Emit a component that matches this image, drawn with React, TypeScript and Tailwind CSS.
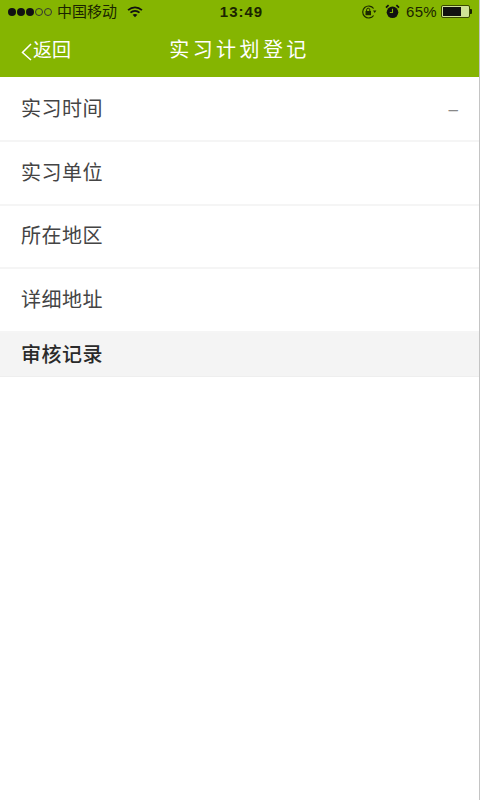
import React from 'react';

const ROWS = [
  { label: '实习时间', value: '–' },
  { label: '实习单位' },
  { label: '所在地区' },
  { label: '详细地址' },
];

const Wifi = () => (
  <svg width="16" height="12" viewBox="0 0 17 13" fill="none" stroke="#111" strokeWidth="2">
    <path d="M1 4.5C5.5 .5 11.5 .5 16 4.5" />
    <path d="M3.6 7.2C6.4 4.8 10.6 4.8 13.4 7.2" />
    <path d="M8.5 12.2 5.9 9.6C7.4 8.5 9.6 8.5 11.1 9.6Z" fill="#111" stroke="none" />
  </svg>
);

const RotationLock = () => (
  <svg width="16" height="16" viewBox="0 0 16 16" fill="none" stroke="#1c2a00" strokeWidth="1.2">
    <path d="M12.6 11.5A6 6 0 1 1 12.6 4.5" />
    <path d="M12 6.5h3.4L13.7 9z" fill="#1c2a00" stroke="none" />
    <rect x="4.5" y="7" width="5.5" height="4.2" fill="#1c2a00" stroke="none" />
    <path d="M5.6 7V5.8a1.6 1.6 0 0 1 3.2 0V7" strokeWidth="1" />
  </svg>
);

const Alarm = () => (
  <svg width="15" height="15" viewBox="0 0 15 15">
    <circle cx="7.5" cy="8.3" r="5.8" fill="#111" />
    <path d="M1 3.6 3.6 1.2M14 3.6 11.4 1.2" stroke="#111" strokeWidth="1.8" />
    <path d="M7.5 4.8v3.7H4.8" stroke="#85b501" strokeWidth="1.1" fill="none" />
  </svg>
);

const StatusBar = () => (
  <div className="h-[23px] flex items-center justify-between pl-[8px] pr-[7px] text-[15px] text-[#1a2400]">
    <div className="flex items-center w-[200px]">
      <div className="flex items-center gap-[1px]">
        <span className="w-[8px] h-[8px] rounded-full bg-[#111]" />
        <span className="w-[8px] h-[8px] rounded-full bg-[#111]" />
        <span className="w-[8px] h-[8px] rounded-full bg-[#111]" />
        <span className="w-[8px] h-[8px] rounded-full border border-[#333]" />
        <span className="w-[8px] h-[8px] rounded-full border border-[#333]" />
      </div>
      <span className="ml-[5px] leading-none">中国移动</span>
      <span className="ml-[10px]"><Wifi /></span>
    </div>
    <span className="ml-[3px] text-[15px] font-bold tracking-[1px] leading-none font-['Liberation_Sans',sans-serif]">13:49</span>
    <div className="flex items-center justify-end w-[200px]">
      <RotationLock />
      <span className="ml-[8px]"><Alarm /></span>
      <span className="ml-[6px] leading-none tracking-[0.3px] font-['Liberation_Sans',sans-serif]">65%</span>
      <div className="ml-[4px] flex items-center">
        <div className="w-[29px] h-[13px] border border-[#3a4a00] rounded-[2px] p-[1px] bg-[#cfe296]">
          <div className="w-[18px] h-full bg-[#111]" />
        </div>
        <div className="w-[2px] h-[5px] bg-[#1a2400] rounded-r-[1px]" />
      </div>
    </div>
  </div>
);

const Header = () => (
  <div className="h-[54px] flex items-center relative text-white">
    <div className="flex items-center pl-[21px]">
      <svg width="11" height="18" viewBox="0 0 11 18" fill="none" stroke="#fff" strokeWidth="1.5" className="mt-[3px]">
        <path d="M10 1 1.5 9.5 10 17" />
      </svg>
      <span className="ml-[1px] text-[19px] leading-none">返回</span>
    </div>
    <span className="absolute left-0 right-0 text-center text-[20px] leading-none tracking-[3.4px]">实习计划登记</span>
  </div>
);

export default function App() {
  return (
    <div className="w-[480px] h-[800px] bg-white border-r border-[#c4c4c4] font-['Liberation_Sans','Noto_Sans_CJK_SC',sans-serif] overflow-hidden">
      <div className="bg-[#85b501]">
        <StatusBar />
        <Header />
      </div>
      <div className="pt-[1px]">
        {ROWS.map((row) => (
          <div key={row.label} className="h-[63.75px] flex items-center justify-between px-[21px] border-b-2 border-[#f5f5f5] text-[20px] text-[#444]">
            <span className="tracking-[0.5px]">{row.label}</span>
            {row.value && <span className="mt-[2px] text-[#888] text-[17px]">{row.value}</span>}
          </div>
        ))}
      </div>
      <div className="h-[44px] flex items-center pl-[21px] bg-[#f4f4f4] border-b border-[#eeeeee] text-[20px] font-medium text-[#2a2a2a]">
        <span className="tracking-[0.5px]">审核记录</span>
      </div>
    </div>
  );
}
